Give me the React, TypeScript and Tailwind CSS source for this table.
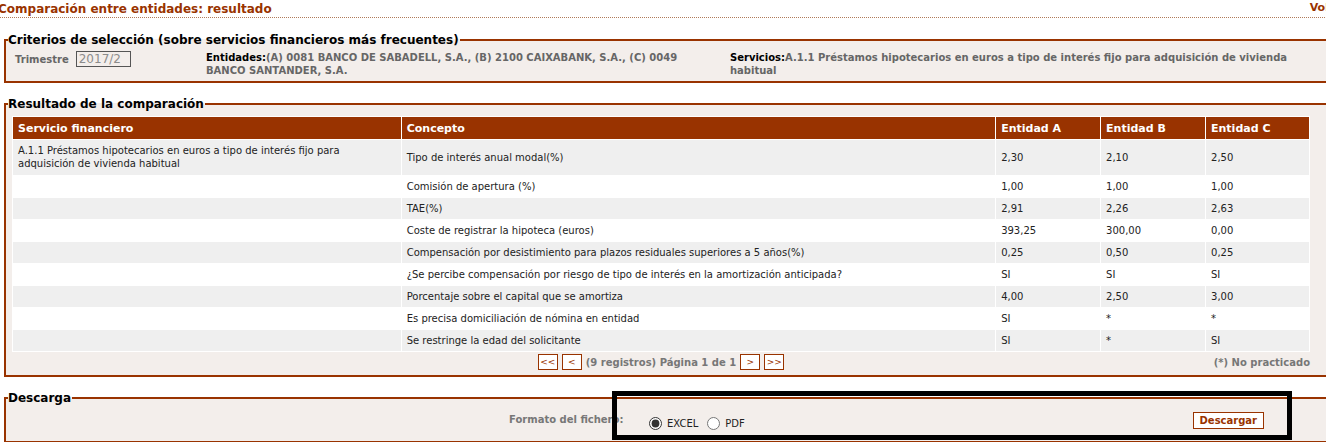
import React from "react";

const rows = [
  { servicio: "A.1.1 Préstamos hipotecarios en euros a tipo de interés fijo para adquisición de vivienda habitual", concepto: "Tipo de interés anual modal(%)", a: "2,30", b: "2,10", c: "2,50" },
  { servicio: "", concepto: "Comisión de apertura (%)", a: "1,00", b: "1,00", c: "1,00" },
  { servicio: "", concepto: "TAE(%)", a: "2,91", b: "2,26", c: "2,63" },
  { servicio: "", concepto: "Coste de registrar la hipoteca (euros)", a: "393,25", b: "300,00", c: "0,00" },
  { servicio: "", concepto: "Compensación por desistimiento para plazos residuales superiores a 5 años(%)", a: "0,25", b: "0,50", c: "0,25" },
  { servicio: "", concepto: "¿Se percibe compensación por riesgo de tipo de interés en la amortización anticipada?", a: "SI", b: "SI", c: "SI" },
  { servicio: "", concepto: "Porcentaje sobre el capital que se amortiza", a: "4,00", b: "2,50", c: "3,00" },
  { servicio: "", concepto: "Es precisa domiciliación de nómina en entidad", a: "SI", b: "*", c: "*" },
  { servicio: "", concepto: "Se restringe la edad del solicitante", a: "SI", b: "*", c: "SI" },
];

const PagerButton = ({ label }: { label: string }) => (
  <span className="inline-flex items-center justify-center w-[20px] h-[16px] border border-[#993300] bg-white text-[9px] text-[#993300] leading-none">
    {label}
  </span>
);

const App = () => {
  return (
    <div className="relative w-[1326px] h-[442px] overflow-hidden bg-white font-['DejaVu_Sans',sans-serif] text-[10px]">
      <div className="w-[1349px]">
        <div className="flex justify-between items-center h-[18px] border-b border-dotted border-[#b07a5a] -ml-[2px]">
          <h1 className="text-[12px] font-bold text-[#993300] leading-none">Comparación entre entidades: resultado</h1>
          <span className="text-[11px] font-bold text-[#993300]">Volver</span>
        </div>

        <fieldset className="mt-[14px] ml-[4px] border-2 border-[#993300] bg-[#F3EEEB] px-[2px] pb-[4px]">
          <legend className="text-[12px] font-bold text-black leading-[16px] pr-[1px]">
            Criterios de selección (sobre servicios financieros más frecuentes)
          </legend>
          <div className="flex items-start pt-[3px] text-[10px] font-bold text-[#666] leading-[13px]">
            <div className="flex items-center gap-[7px] w-[198px] pl-[7px]">
              <span>Trimestre</span>
              <span className="inline-block w-[55px] h-[16px] border border-[#555] text-[12px] font-normal text-[#8c8c8c] leading-[14px] pl-[2px]">2017/2</span>
            </div>
            <div className="w-[524px] pr-[30px]">
              <span className="text-black">Entidades:</span>(A) 0081 BANCO DE SABADELL, S.A., (B) 2100 CAIXABANK, S.A., (C) 0049 BANCO SANTANDER, S.A.
            </div>
            <div className="w-[560px]">
              <span className="text-black">Servicios:</span>A.1.1 Préstamos hipotecarios en euros a tipo de interés fijo para adquisición de vivienda habitual
            </div>
          </div>
        </fieldset>

        <fieldset className="mt-[13px] ml-[4px] border-2 border-[#993300] bg-[#F3EEEB] px-[2px] pb-[3px]">
          <legend className="text-[12px] font-bold text-black leading-[16px] pr-[1px]">Resultado de la comparación</legend>
          <table className="ml-[4px] mt-[4px] w-[1298px] border-separate border-spacing-[1px] bg-white text-[10px] text-[#222] leading-[13px] -mx-[1px]">
            <thead>
              <tr className="bg-[#993300] text-white font-bold text-[11px] text-left h-[22px]">
                <th className="w-[388px] px-[5px]">Servicio financiero</th>
                <th className="w-[594px] px-[5px]">Concepto</th>
                <th className="w-[104px] px-[5px]">Entidad A</th>
                <th className="w-[104px] px-[5px]">Entidad B</th>
                <th className="w-[103px] px-[5px]">Entidad C</th>
              </tr>
            </thead>
            <tbody>
              {rows.map((r, i) => (
                <tr key={i} className={i % 2 === 0 ? "bg-[#EFEFEF]" : "bg-white"}>
                  <td className={`px-[5px] align-top ${i === 0 ? "pt-[4px] pb-[5px]" : "h-[21px]"}`}>{r.servicio}</td>
                  <td className="px-[5px] align-middle">{r.concepto}</td>
                  <td className="px-[5px] align-middle">{r.a}</td>
                  <td className="px-[5px] align-middle">{r.b}</td>
                  <td className="px-[5px] align-middle">{r.c}</td>
                </tr>
              ))}
            </tbody>
          </table>
          <div className="relative w-[1298px] ml-[4px] h-[20px] flex items-center justify-center gap-[4px]">
            <PagerButton label="<<" />
            <PagerButton label="<" />
            <span className="font-bold text-[10px] text-[#777]">(9 registros) Página 1 de 1</span>
            <PagerButton label=">" />
            <PagerButton label=">>" />
            <span className="absolute right-0 top-[3px] font-bold text-[10px] text-[#777]">(*) No practicado</span>
          </div>
        </fieldset>

        <fieldset className="mt-[13px] ml-[4px] h-[53px] border-2 border-[#993300] bg-[#F3EEEB] px-[2px]">
          <legend className="text-[12px] font-bold text-black leading-[16px] pr-[1px]">Descarga</legend>
          <div className="flex items-start pt-[6px]">
            <span className="ml-[501px] w-[140px] text-[10px] font-bold text-[#777]">Formato del fichero:</span>
            <label className="flex items-center mt-[4px] text-[10px] text-[#222]">
              <input type="radio" name="fmt" defaultChecked className="w-[13px] h-[13px] m-0 accent-[#333]" />
              <span className="ml-[5px]">EXCEL</span>
            </label>
            <label className="flex items-center mt-[4px] ml-[9px] text-[10px] text-[#222]">
              <input type="radio" name="fmt" className="w-[13px] h-[13px] m-0" />
              <span className="ml-[5px]">PDF</span>
            </label>
            <button className="ml-[448px] w-[71px] h-[17px] border border-[#993300] bg-white text-[10px] font-bold text-[#993300] leading-none">
              Descargar
            </button>
          </div>
        </fieldset>
      </div>

      <div className="absolute left-[612px] top-[391px] w-[680px] h-[49px] border-[5px] border-black pointer-events-none" />
    </div>
  );
};

export default App;
